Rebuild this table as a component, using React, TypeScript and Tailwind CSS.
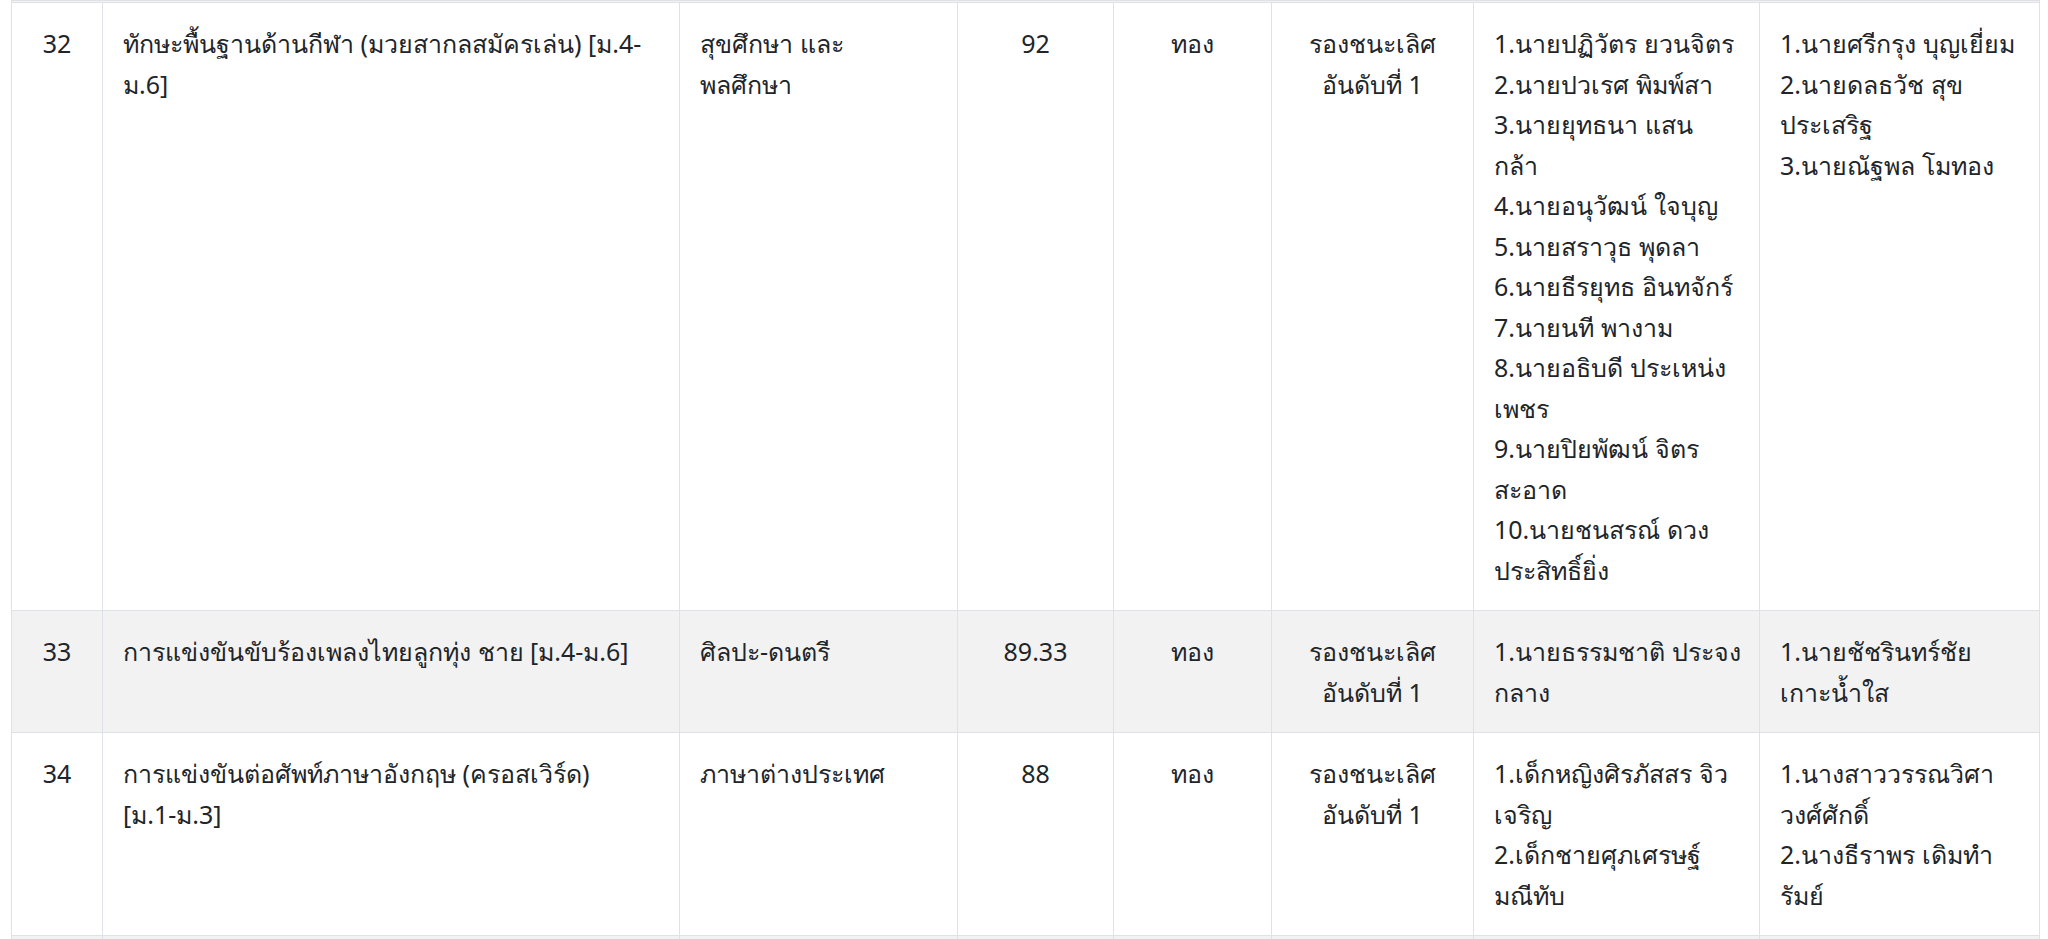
type Row = {
  no: number;
  title: string;
  group: string;
  score: string;
  medal: string;
  award: string;
  students: string;
  teachers: string;
};

// line breaks follow the wrapping in the original page
const rows: Row[] = [
  {
    no: 32,
    title: "ทักษะพื้นฐานด้านกีฬา (มวยสากลสมัครเล่น) [ม.4-\nม.6]",
    group: "สุขศึกษา และ\nพลศึกษา",
    score: "92",
    medal: "ทอง",
    award: "รองชนะเลิศ\nอันดับที่ 1",
    students: [
      "1.นายปฏิวัตร ยวนจิตร",
      "2.นายปวเรศ พิมพ์สา",
      "3.นายยุทธนา แสน\nกล้า",
      "4.นายอนุวัฒน์ ใจบุญ",
      "5.นายสราวุธ พุดลา",
      "6.นายธีรยุทธ อินทจักร์",
      "7.นายนที พางาม",
      "8.นายอธิบดี ประเหน่ง\nเพชร",
      "9.นายปิยพัฒน์ จิตร\nสะอาด",
      "10.นายชนสรณ์ ดวง\nประสิทธิ์ยิ่ง",
    ].join("\n"),
    teachers: ["1.นายศรีกรุง บุญเยี่ยม", "2.นายดลธวัช สุข\nประเสริฐ", "3.นายณัฐพล โมทอง"].join("\n"),
  },
  {
    no: 33,
    title: "การแข่งขันขับร้องเพลงไทยลูกทุ่ง ชาย [ม.4-ม.6]",
    group: "ศิลปะ-ดนตรี",
    score: "89.33",
    medal: "ทอง",
    award: "รองชนะเลิศ\nอันดับที่ 1",
    students: "1.นายธรรมชาติ ประจง\nกลาง",
    teachers: "1.นายชัชรินทร์ชัย\nเกาะน้ำใส",
  },
  {
    no: 34,
    title: "การแข่งขันต่อศัพท์ภาษาอังกฤษ (ครอสเวิร์ด)\n[ม.1-ม.3]",
    group: "ภาษาต่างประเทศ",
    score: "88",
    medal: "ทอง",
    award: "รองชนะเลิศ\nอันดับที่ 1",
    students: "1.เด็กหญิงศิรภัสสร จิว\nเจริญ\n2.เด็กชายศุภเศรษฐ์\nมณีทับ",
    teachers: "1.นางสาววรรณวิศา\nวงศ์ศักดิ์\n2.นางธีราพร เดิมทำ\nรัมย์",
  },
];

const cell = "border border-[#dee2e6] px-5 py-5 align-top whitespace-pre";

export default function App() {
  return (
    <div
      className="min-h-screen bg-white pl-[11px] pr-[8px] text-[25px] leading-[40.5px] text-[#212529]"
      style={{ fontFamily: '"Noto Sans", sans-serif' }}
    >
      <table className="w-[2029px] table-fixed border-collapse">
        <colgroup>
          <col className="w-[91px]" />
          <col className="w-[577px]" />
          <col className="w-[278px]" />
          <col className="w-[156px]" />
          <col className="w-[158px]" />
          <col className="w-[202px]" />
          <col className="w-[286px]" />
          <col className="w-[280px]" />
        </colgroup>
        <tbody>
          <tr className="bg-[#f2f2f2]">
            <td colSpan={8} className="h-[2px] border border-[#dee2e6] p-0" />
          </tr>
          {rows.map((r, i) => (
            <tr key={r.no} className={i % 2 === 1 ? "bg-[#f2f2f2]" : "bg-white"}>
              <td className={`${cell} text-center`}>{r.no}</td>
              <td className={cell}>{r.title}</td>
              <td className={cell}>{r.group}</td>
              <td className={`${cell} text-center`}>{r.score}</td>
              <td className={`${cell} text-center`}>{r.medal}</td>
              <td className={`${cell} text-center`}>{r.award}</td>
              <td className={cell}>{r.students}</td>
              <td className={cell}>{r.teachers}</td>
            </tr>
          ))}
          <tr className="bg-[#f2f2f2]">
            <td className={cell}>&nbsp;</td>
            <td className={cell} />
            <td className={cell} />
            <td className={cell} />
            <td className={cell} />
            <td className={cell} />
            <td className={cell} />
            <td className={cell} />
          </tr>
        </tbody>
      </table>
    </div>
  );
}
